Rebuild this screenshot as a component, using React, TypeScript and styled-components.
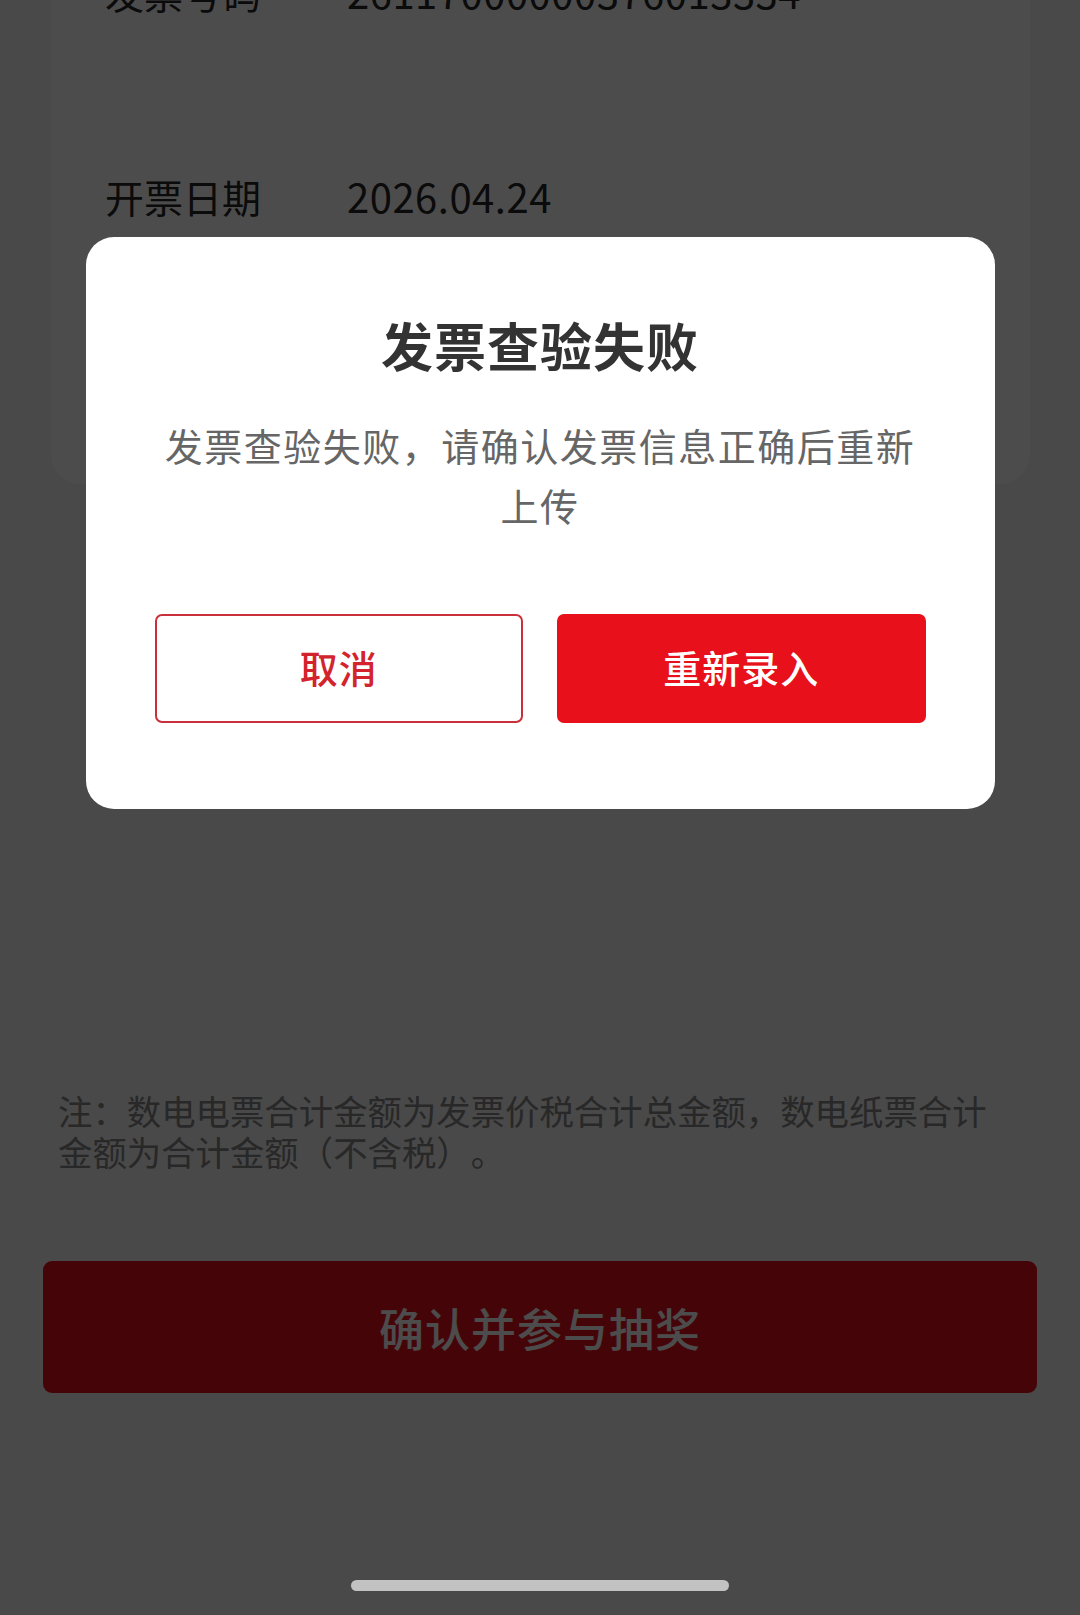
import React from "react"
import styled, { createGlobalStyle } from "styled-components"

const GlobalStyle = createGlobalStyle`
  html, body {
    margin: 0;
    padding: 0;
    background: #f4f4f4;
    font-family: "Noto Sans CJK SC", "Noto Sans", sans-serif;
    text-spacing-trim: space-all;
  }
  * {
    box-sizing: border-box;
  }
`
const Page = styled.div`
  width: 1080px;
  height: 1615px;
  overflow: hidden;
  position: relative;
  background: #f4f4f4;
  display: flex;
  flex-direction: column;
`
const Card = styled.div`
  margin: -38px 50px 0 51px;
  padding: 0 54px 54px 54px;
  background: #ffffff;
  border-radius: 0 0 30px 30px;
  display: flex;
  flex-direction: column;
  gap: 144px;
`
const Row = styled.div`
  display: flex;
  align-items: center;
  height: 60px;
  font-size: 39px;
  color: #262626;
`
const Label = styled.span`
  width: 242px;
  flex-shrink: 0;
`
const Value = styled.span`
  font-size: 40px;
  letter-spacing: 0.5px;
`
const Note = styled.p`
  margin: 606px 0 0 0;
  padding: 0 80px 0 58px;
  font-size: 34.4px;
  line-height: 41px;
  color: #858585;
`
const SubmitButton = styled.button`
  margin: 89px 43px 0 43px;
  height: 132px;
  border: none;
  border-radius: 9px;
  background: #e8111b;
  color: #ffffff;
  font-family: inherit;
  font-size: 45px;
  font-weight: 500;
  letter-spacing: 1px;
`
const Mask = styled.div`
  position: absolute;
  inset: 0;
  background: rgba(0, 0, 0, 0.7);
  display: flex;
  justify-content: center;
  align-items: flex-start;
  padding-top: 237px;
`
const Dialog = styled.div`
  width: 909px;
  background: #ffffff;
  border-radius: 28px;
  padding: 76px 69px 86px 69px;
  display: flex;
  flex-direction: column;
  align-items: center;
`
const Title = styled.h2`
  margin: 0;
  font-size: 52px;
  line-height: 64px;
  font-weight: 700;
  letter-spacing: 1px;
  color: #333333;
`
const Message = styled.p`
  margin: 38px 0 0 0;
  width: 100%;
  font-size: 38px;
  line-height: 60px;
  letter-spacing: 1.5px;
  color: #666666;
  text-align: center;
`
const Actions = styled.div`
  margin-top: 79px;
  width: 100%;
  display: grid;
  grid-template-columns: 1fr 1fr;
  gap: 34px;
`
const ActionButton = styled.button<{ primary?: boolean }>`
  height: 109px;
  border-radius: 7px;
  border: 2px solid ${props => props.primary ? "#e8111b" : "#c9303a"};
  background: ${props => props.primary ? "#e8111b" : "#ffffff"};
  color: ${props => props.primary ? "#ffffff" : "#d3232c"};
  font-family: inherit;
  font-size: 38px;
  font-weight: 500;
  letter-spacing: 1px;
  padding-bottom: 6px;
`
const HomeBar = styled.div`
  position: absolute;
  left: 351px;
  bottom: 24px;
  width: 378px;
  height: 11px;
  border-radius: 6px;
  background: #c2c2c2;
`

function App() {
  return (
    <>
      <GlobalStyle />
      <Page>
        <Card>
          <Row>
            <Label>发票号码</Label>
            <Value>26117000000376013334</Value>
          </Row>
          <Row>
            <Label>开票日期</Label>
            <Value>2026.04.24</Value>
          </Row>
          <Row>
            <Label>合计金额</Label>
            <Value>128.00</Value>
          </Row>
        </Card>
        <Note>
          注：数电电票合计金额为发票价税合计总金额，数电纸票合计金额为合计金额（不含税）。
        </Note>
        <SubmitButton>确认并参与抽奖</SubmitButton>
        <Mask>
          <Dialog>
            <Title>发票查验失败</Title>
            <Message>发票查验失败，请确认发票信息正确后重新上传</Message>
            <Actions>
              <ActionButton>取消</ActionButton>
              <ActionButton primary>重新录入</ActionButton>
            </Actions>
          </Dialog>
        </Mask>
        <HomeBar />
      </Page>
    </>
  )
}

export default App
